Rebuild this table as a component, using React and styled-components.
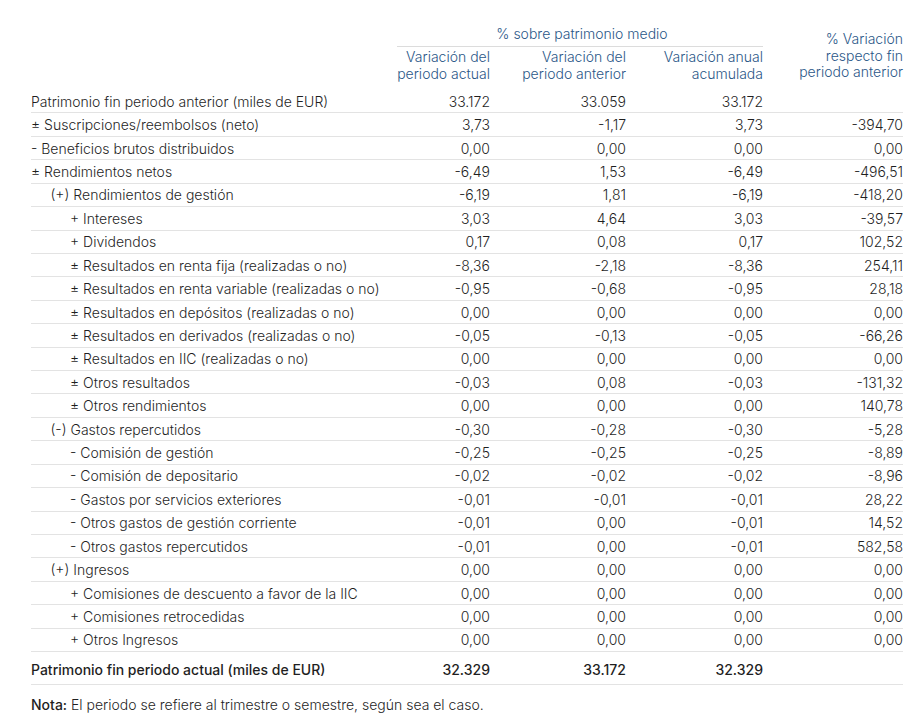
import styled, { createGlobalStyle } from 'styled-components';

const GlobalStyle = createGlobalStyle`
  body {
    margin: 0;
    background: #ffffff;
    font-family: 'Inter', 'Liberation Sans', sans-serif;
  }
`;

const rows = [
  { label: 'Patrimonio fin periodo anterior (miles de EUR)', level: 0, v: ['33.172', '33.059', '33.172', ''] },
  { label: '± Suscripciones/reembolsos (neto)', level: 0, v: ['3,73', '-1,17', '3,73', '-394,70'] },
  { label: '- Beneficios brutos distribuidos', level: 0, v: ['0,00', '0,00', '0,00', '0,00'] },
  { label: '± Rendimientos netos', level: 0, v: ['-6,49', '1,53', '-6,49', '-496,51'] },
  { label: '(+) Rendimientos de gestión', level: 1, v: ['-6,19', '1,81', '-6,19', '-418,20'] },
  { label: '+ Intereses', level: 2, v: ['3,03', '4,64', '3,03', '-39,57'] },
  { label: '+ Dividendos', level: 2, v: ['0,17', '0,08', '0,17', '102,52'] },
  { label: '± Resultados en renta fija (realizadas o no)', level: 2, v: ['-8,36', '-2,18', '-8,36', '254,11'] },
  { label: '± Resultados en renta variable (realizadas o no)', level: 2, v: ['-0,95', '-0,68', '-0,95', '28,18'] },
  { label: '± Resultados en depósitos (realizadas o no)', level: 2, v: ['0,00', '0,00', '0,00', '0,00'] },
  { label: '± Resultados en derivados (realizadas o no)', level: 2, v: ['-0,05', '-0,13', '-0,05', '-66,26'] },
  { label: '± Resultados en IIC (realizadas o no)', level: 2, v: ['0,00', '0,00', '0,00', '0,00'] },
  { label: '± Otros resultados', level: 2, v: ['-0,03', '0,08', '-0,03', '-131,32'] },
  { label: '± Otros rendimientos', level: 2, v: ['0,00', '0,00', '0,00', '140,78'] },
  { label: '(-) Gastos repercutidos', level: 1, v: ['-0,30', '-0,28', '-0,30', '-5,28'] },
  { label: '- Comisión de gestión', level: 2, v: ['-0,25', '-0,25', '-0,25', '-8,89'] },
  { label: '- Comisión de depositario', level: 2, v: ['-0,02', '-0,02', '-0,02', '-8,96'] },
  { label: '- Gastos por servicios exteriores', level: 2, v: ['-0,01', '-0,01', '-0,01', '28,22'] },
  { label: '- Otros gastos de gestión corriente', level: 2, v: ['-0,01', '0,00', '-0,01', '14,52'] },
  { label: '- Otros gastos repercutidos', level: 2, v: ['-0,01', '0,00', '-0,01', '582,58'] },
  { label: '(+) Ingresos', level: 1, v: ['0,00', '0,00', '0,00', '0,00'] },
  { label: '+ Comisiones de descuento a favor de la IIC', level: 2, v: ['0,00', '0,00', '0,00', '0,00'] },
  { label: '+ Comisiones retrocedidas', level: 2, v: ['0,00', '0,00', '0,00', '0,00'] },
  { label: '+ Otros Ingresos', level: 2, v: ['0,00', '0,00', '0,00', '0,00'] },
];

const total = { label: 'Patrimonio fin periodo actual (miles de EUR)', v: ['32.329', '33.172', '32.329', ''] };

export default function App() {
  return (
    <>
      <GlobalStyle />
      <Page>
        <Head>
          <GroupHead>
            <GroupTitle>% sobre patrimonio medio</GroupTitle>
          </GroupHead>
          <SideHead>
            % Variación
            <br />
            respecto fin
            <br />
            periodo anterior
          </SideHead>
          <ColHead col={2}>Variación del<br />periodo actual</ColHead>
          <ColHead col={3}>Variación del<br />periodo anterior</ColHead>
          <ColHead col={4}>Variación anual<br />acumulada</ColHead>
        </Head>

        {rows.map((r, i) => (
          <Row key={i}>
            <Label level={r.level}>{r.label}</Label>
            {r.v.map((n, j) => (
              <Num key={j}>{n}</Num>
            ))}
          </Row>
        ))}

        <Row total>
          <Label level={0}>{total.label}</Label>
          {total.v.map((n, j) => (
            <Num key={j}>{n}</Num>
          ))}
        </Row>

        <Note>
          <strong>Nota:</strong> El periodo se refiere al trimestre o semestre, según sea el caso.
        </Note>
      </Page>
    </>
  );
}

const cols = '1fr 93px 136px 137px 140px';

const Page = styled.div`
  padding: 24px 13px 0 31px;
  width: 872px;
  color: #1f1f1f;
  font-size: 14px;
  font-weight: 300;
`;

const Head = styled.div`
  display: grid;
  grid-template-columns: ${cols};
  grid-template-rows: auto auto;
  color: #2b5788;
`;

const GroupHead = styled.div`
  grid-column: 2 / 5;
  grid-row: 1;
  border-bottom: 1px solid #dcdcdc;
  display: flex;
  justify-content: center;
  padding-bottom: 4px;
  margin-top: 1px;
`;

const GroupTitle = styled.span`
  line-height: 17px;
  margin-left: 4px;
`;

const SideHead = styled.div`
  grid-column: 5;
  grid-row: 1 / 3;
  text-align: right;
  line-height: 16.5px;
  padding-top: 7px;
`;

const ColHead = styled.div`
  grid-column: ${(p) => p.col};
  grid-row: 2;
  text-align: right;
  line-height: 16.5px;
  padding-top: 2px;
  padding-bottom: 8px;
  white-space: nowrap;
`;

const Row = styled.div`
  display: grid;
  grid-template-columns: ${cols};
  align-items: center;
  height: ${(p) => (p.total ? '33px' : '23.43px')};
  padding-top: ${(p) => (p.total ? '3px' : '0')};
  font-weight: ${(p) => (p.total ? 500 : 300)};
  border-bottom: 1px solid #e3e3e3;
  box-sizing: border-box;
`;

const Label = styled.div`
  padding-left: ${(p) => p.level * 19.5}px;
  white-space: nowrap;
`;

const Num = styled.div`
  text-align: right;
`;

const Note = styled.p`
  margin: 11px 0 0;

  strong {
    font-weight: 500;
  }
`;
